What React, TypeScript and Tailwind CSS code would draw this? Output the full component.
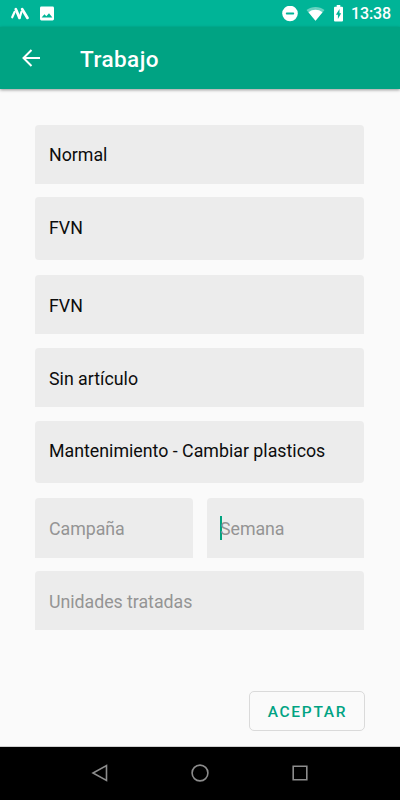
import clsx from "clsx";

interface FieldProps {
  value?: string;
  placeholder?: string;
  variant?: "filled" | "rounded";
  focused?: boolean;
  className?: string;
}

function Field({ value, placeholder, variant = "filled", focused, className }: FieldProps) {
  return (
    <div
      className={clsx(
        "flex bg-[#ececec] px-[14px] text-[17.8px] leading-6",
        variant === "rounded" ? "rounded-[4px]" : "rounded-t-[4px]",
        value ? "text-[#0c0c0c]" : "text-[#949494] tracking-[-0.04px]",
        className
      )}
    >
      {focused && <span className="-ml-px -mr-[2px] -mt-px h-6 w-[2px] bg-[#00a37f]" />}
      <span className="whitespace-nowrap">{value ?? placeholder}</span>
    </div>
  );
}

function StatusBar() {
  return (
    <div className="flex h-[27px] shrink-0 items-center justify-between bg-[#00b497] text-white">
      <div className="flex items-center pl-[10px]">
        <svg width="20" height="16" viewBox="0 0 20 16" fill="none" stroke="currentColor" strokeLinecap="round">
          <path d="M5.800 3.300 9.500 11.900M12.200 3.300 17.500 11.900" strokeWidth="2.800" />
          <path d="M4.600 6 2.200 11.300M11.400 6 9.700 11.500" strokeWidth="2.200" />
        </svg>
        <svg className="ml-[9px]" width="16" height="16" viewBox="0 0 16 16">
          <path
            fill="currentColor"
            fillRule="evenodd"
            d="M2.400 .500h11.200A1.400 1.400 0 0 1 15 1.900v11.200a1.400 1.400 0 0 1-1.400 1.400H2.400A1.400 1.400 0 0 1 1 13.100V1.900A1.400 1.400 0 0 1 2.400 .500ZM2.600 11.500h10.800L10 7.200l-2.700 3.100-1.800-2.100Z"
          />
        </svg>
      </div>
      <div className="flex items-center pr-[9px]">
        <svg width="16" height="16" viewBox="0 0 16 16">
          <circle cx="8" cy="7.500" r="7.800" fill="currentColor" />
          <path d="M4.700 7.500h6.600" stroke="#00b497" strokeWidth="1.800" strokeLinecap="round" />
        </svg>
        <svg className="ml-[8px]" width="19" height="16" viewBox="0 0 20 16" fill="currentColor">
          <path d="M.500 3.700C6-.400 14-.400 19.500 3.700L10 15Z" opacity=".4" />
          <path d="M2.600 6.200C7 2.700 13 2.700 17.400 6.200L10 15Z" />
        </svg>
        <svg className="ml-[9px]" width="9" height="17" viewBox="0 0 9 17">
          <path
            fill="currentColor"
            fillRule="evenodd"
            d="M2.700 0h3.600v1.700h1.700a1 1 0 0 1 1 1V15.500a1 1 0 0 1-1 1H1a1 1 0 0 1-1-1V2.700a1 1 0 0 1 1-1h1.700ZM5.500 4 1.900 9.800h2v4.200L7.200 8.300H5.500Z"
          />
        </svg>
        <span className="ml-[8px] text-[16px] font-medium leading-[28px] tracking-[-0.1px]">13:38</span>
      </div>
    </div>
  );
}

function AppBar() {
  return (
    <header className="relative flex h-[62px] shrink-0 items-center bg-[#00a383] pt-[2px] text-white shadow-[0_1px_3px_rgba(0,0,0,0.4)]">
      <svg className="-mt-[3px] ml-[21px]" width="19" height="18" viewBox="0 0 19 18" fill="none" stroke="currentColor" strokeWidth="2">
        <path d="M19 9H2.500M10.500 1l-8 8 8 8" />
      </svg>
      <h1 className="ml-[40px] text-[22.500px] font-medium leading-none tracking-[0.450px]">Trabajo</h1>
    </header>
  );
}

function NavBar() {
  return (
    <nav className="flex h-[54px] shrink-0 items-center justify-between border-t border-[#d0d0d0] bg-black px-[91px] pb-px text-[#8c8c8c]">
      <svg width="18" height="18" viewBox="0 0 18 18" fill="none" stroke="currentColor" strokeWidth="1.600">
        <path d="M15.500 1.600v14.800L2 9Z" />
      </svg>
      <svg width="18" height="18" viewBox="0 0 18 18" fill="none" stroke="currentColor" strokeWidth="1.600">
        <circle cx="9" cy="9" r="7.900" />
      </svg>
      <svg width="18" height="18" viewBox="0 0 18 18" fill="none" stroke="currentColor" strokeWidth="1.600">
        <path d="M2.200 2.200h13.600v13.600H2.200Z" />
      </svg>
    </nav>
  );
}

export default function App() {
  return (
    <div className="flex h-[800px] w-[400px] flex-col overflow-hidden bg-[#fafafa] font-['Roboto',sans-serif]">
      <StatusBar />
      <AppBar />
      <main className="flex flex-1 flex-col pl-[35px] pr-9 pt-9">
        <Field value="Normal" className="h-[59px] pt-[18px]" />
        <Field value="FVN" variant="rounded" className="mt-[13px] h-[63px] pt-[19px]" />
        <Field value="FVN" className="mt-[15px] h-[59px] pt-[19px]" />
        <Field value="Sin artículo" className="mt-[14px] h-[59px] pt-[19px]" />
        <Field value="Mantenimiento - Cambiar plasticos" variant="rounded" className="mt-[14px] h-[62px] pt-[18px]" />
        <div className="mt-[15px] flex gap-[14px]">
          <Field placeholder="Campaña" className="h-[60px] w-[158px] pt-[19px]" />
          <Field placeholder="Semana" focused className="h-[60px] flex-1 pt-[19px]" />
        </div>
        <Field placeholder="Unidades tratadas" className="mt-[13px] h-[59px] pt-[19px]" />
        <button className="-mr-px mb-[15px] mt-auto h-10 w-[116px] self-end rounded-[5px] border border-[#dadada] pl-px pt-[3px] text-[15.500px] font-medium tracking-[1.700px] text-[#00a383]">
          ACEPTAR
        </button>
      </main>
      <NavBar />
    </div>
  );
}
